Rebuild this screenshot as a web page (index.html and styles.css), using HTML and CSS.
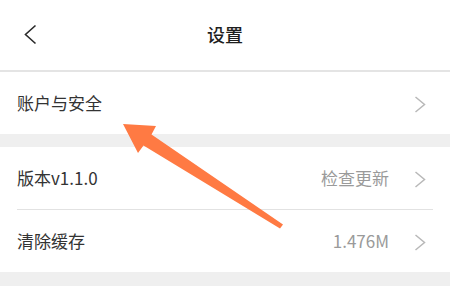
FILE: index.html
```html
<!DOCTYPE html>
<html lang="zh-CN">
<head>
<meta charset="utf-8">
<title>设置</title>
<link rel="stylesheet" href="styles.css">
</head>
<body>
<div class="page">
  <header class="topbar">
    <div class="back">
      <svg width="13" height="21" viewBox="0 0 13 21"><polyline points="11.5,1.5 1.5,10.5 11.5,19.5" fill="none" stroke="#2a2a2a" stroke-width="1.6"/></svg>
    </div>
    <div class="title">设置</div>
    <div></div>
  </header>

  <section class="group">
    <div class="row">
      <span class="label">账户与安全</span>
      <span class="right">
        <svg class="chev" width="12" height="17" viewBox="0 0 12 17"><polyline points="1.5,1 10.5,8.5 1.5,16" fill="none" stroke="#b8b8b8" stroke-width="1.5"/></svg>
      </span>
    </div>
  </section>

  <div class="band"></div>

  <section class="group">
    <div class="row">
      <span class="label">版本v1.1.0</span>
      <span class="right">
        <span class="value">检查更新</span>
        <svg class="chev" width="12" height="17" viewBox="0 0 12 17"><polyline points="1.5,1 10.5,8.5 1.5,16" fill="none" stroke="#b8b8b8" stroke-width="1.5"/></svg>
      </span>
    </div>
    <div class="divider"></div>
    <div class="row">
      <span class="label">清除缓存</span>
      <span class="right">
        <span class="value">1.476M</span>
        <svg class="chev" width="12" height="17" viewBox="0 0 12 17"><polyline points="1.5,1 10.5,8.5 1.5,16" fill="none" stroke="#b8b8b8" stroke-width="1.5"/></svg>
      </span>
    </div>
  </section>

  <div class="band band-bottom"></div>

  <svg class="arrow" width="450" height="286" viewBox="0 0 450 286">
    <polygon points="123,124 156,126 151.5,134.5 283,224.5 280,228.5 143.5,145.5 138,153" fill="#ff7a43"/>
  </svg>
</div>
</body>
</html>
```

FILE: styles.css
```css
html, body {
  margin: 0;
  padding: 0;
  background: #ffffff;
}

.page {
  position: relative;
  width: 450px;
  height: 286px;
  overflow: hidden;
  font-family: "Noto Sans CJK SC", "Noto Sans", sans-serif;
  background: #ffffff;
}

.topbar {
  height: 70px;
  display: grid;
  grid-template-columns: 80px 1fr 80px;
  align-items: center;
  border-bottom: 2px solid #e4e4e4;
}

.back {
  padding-left: 24px;
  display: flex;
  align-items: center;
  height: 20px;
  margin-top: -2px;
}

.title {
  text-align: center;
  font-size: 18px;
  font-weight: 500;
  color: #1e1e1e;
  line-height: 20px;
  margin-top: -2px;
}

.group {
  background: #ffffff;
}

.row {
  height: 62px;
  display: flex;
  align-items: center;
  justify-content: space-between;
  padding: 0 24px 0 17px;
}

.label {
  font-size: 17px;
  color: #333333;
  line-height: 20px;
}

.right {
  display: flex;
  align-items: center;
  gap: 25px;
}

.value {
  font-size: 17px;
  color: #9a9a9a;
  line-height: 20px;
}

.chev {
  display: block;
  margin-top: 2px;
}

.divider {
  height: 1px;
  background: #e2e2e2;
  margin: 0 17px;
}

.band {
  height: 13px;
  background: #efefef;
}

.band-bottom {
  height: 14px;
}

.arrow {
  position: absolute;
  left: 0;
  top: 0;
  pointer-events: none;
}
```
